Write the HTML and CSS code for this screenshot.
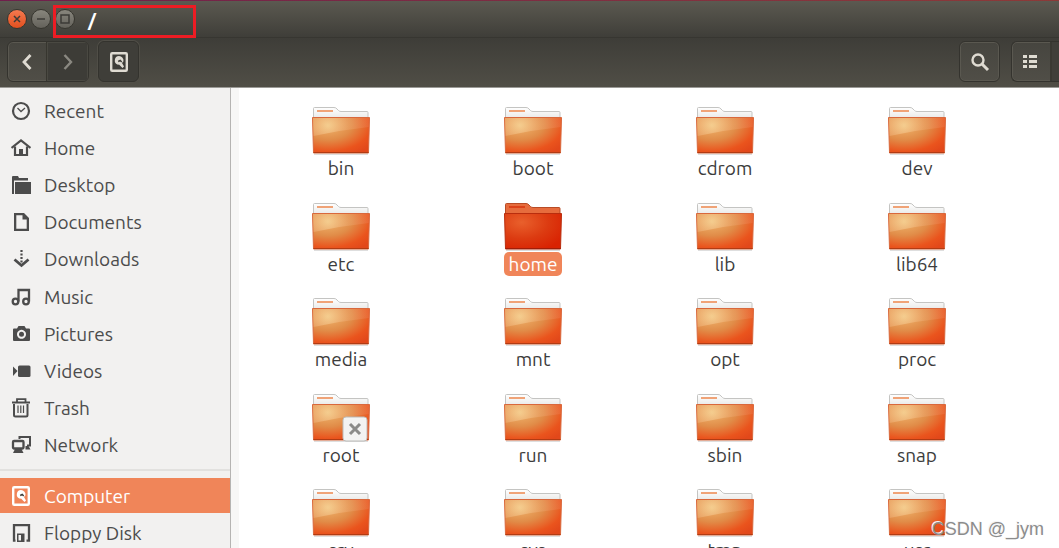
FILE: index.html
```
<!DOCTYPE html>
<html lang="en">
<head>
    <meta charset="UTF-8">
    <meta name="viewport" content="width=device-width, initial-scale=1.0">
    <title>/</title>
    <link rel="stylesheet" href="styles.css">
    <script src="script.js" defer></script>
</head>
<body>
    <svg class="defs" width="0" height="0" aria-hidden="true">
        <defs>
            <linearGradient id="gTab" x1="0" y1="0" x2="0" y2="1">
                <stop offset="0" stop-color="#ffffff"/><stop offset="1" stop-color="#e6e6e4"/>
            </linearGradient>
            <radialGradient id="gBase" cx="0.27" cy="0.2" r="0.95">
                <stop offset="0" stop-color="#efb870"/><stop offset="0.45" stop-color="#e18c48"/><stop offset="0.8" stop-color="#ea541d"/><stop offset="1" stop-color="#e2481a"/>
            </radialGradient>
            <radialGradient id="gGlow" gradientUnits="userSpaceOnUse" cx="17" cy="20" r="42">
                <stop offset="0" stop-color="#f8dca4" stop-opacity="0.6"/><stop offset="0.5" stop-color="#f4b583" stop-opacity="0.3"/><stop offset="1" stop-color="#ee8058" stop-opacity="0.3"/>
            </radialGradient>
            <radialGradient id="gHome" cx="0.3" cy="0.25" r="0.85">
                <stop offset="0" stop-color="#e9602c"/><stop offset="0.55" stop-color="#dc3b11"/><stop offset="1" stop-color="#d92202"/>
            </radialGradient>
            <symbol id="folder" viewBox="0 0 60 50">
                <path d="M3 47.5h54V49H3z" fill="#000" opacity="0.13"/>
                <path d="M2.500 14V2.500q0-1 1-1H23q2 0 3 1.500L27.500 4.500q1 1 2.500 1h26q1 0 1 1V14z" fill="url(#gTab)" stroke="#c4c4c2"/>
                <path d="M6 4h16v2H6z" fill="#f0a377"/>
                <path d="M1.500 11.500h57L57.500 47h-55z" fill="url(#gBase)" stroke="#d9683c"/>
                <path d="M2 12h56l-.3 9Q30 24 2.500 30z" fill="url(#gGlow)"/>
                <path d="M2.500 46.500h55" stroke="#b13c14"/>
            </symbol>
            <symbol id="folder-open" viewBox="0 0 60 50">
                <path d="M3 47.5h54V49H3z" fill="#000" opacity="0.15"/>
                <path d="M2.500 14V2.500q0-1 1-1H23q2 0 3 1.500L27.500 4.500q1 1 2.500 1h26q1 0 1 1V14z" fill="#e66c3d" stroke="#b84c26"/>
                <path d="M6 4h16v2H6z" fill="#dc4218"/>
                <path d="M1.500 11.500h57L57.500 47h-55z" fill="url(#gHome)" stroke="#b92d0d"/>
                <path d="M2.500 46.500h55" stroke="#a01e08"/>
            </symbol>
            <symbol id="i-disk" viewBox="0 0 20 20">
                <rect x="2.200" y="1.200" width="15.600" height="17.600" rx="1" fill="none" stroke="currentColor" stroke-width="2.400"/>
                <path d="M10 4a4.500 4.500 0 0 1 4.400 5.500L13 11l2 3.500L13.500 16 10 12.500l-1 .3A4.500 4.500 0 0 1 10 4z" fill="currentColor"/>
                <path d="M9.200 9.500l2-1 1.500 1.500" fill="none" class="disk-arm"/>
            </symbol>
        </defs>
    </svg>
    <header class="window-head">
        <div class="titlebar">
            <button class="win-btn close" type="button" aria-label="Close">
                <svg viewBox="0 0 20 20"><path d="M7 7l6 6M13 7l-6 6"/></svg>
            </button>
            <button class="win-btn" type="button" aria-label="Minimize">
                <svg viewBox="0 0 20 20"><path d="M6 10h8"/></svg>
            </button>
            <button class="win-btn" type="button" aria-label="Maximize">
                <svg viewBox="0 0 20 20"><path d="M6 6h8v8H6z"/></svg>
            </button>
            <h1 class="title">/</h1>
            <div class="mark"></div>
        </div>
        <div class="toolbar">
            <div class="btn-group">
                <button type="button" aria-label="Back">
                    <svg viewBox="0 0 20 20"><path d="M13.500 3L7 10l6.500 7" fill="none" stroke="currentColor" stroke-width="2.800"/></svg>
                </button>
                <button class="off" type="button" aria-label="Forward">
                    <svg viewBox="0 0 20 20"><path d="M6.500 3l6.500 7-6.500 7" fill="none" stroke="currentColor" stroke-width="2.400"/></svg>
                </button>
            </div>
            <button class="btn pressed" type="button" aria-label="Computer">
                <svg viewBox="0 0 20 20"><use href="#i-disk"/></svg>
            </button>
            <button class="btn search" type="button" aria-label="Search">
                <svg viewBox="0 0 20 20"><circle cx="8" cy="8" r="5.500" fill="none" stroke="currentColor" stroke-width="2.400"/><path d="M12 12l6 6" stroke="currentColor" stroke-width="3"/></svg>
            </button>
            <div class="btn-group views">
                <button type="button" aria-label="List view">
                    <svg viewBox="0 0 20 20"><path d="M2 3h4v3H2zM8 3h8v3H8zM2 8h4v3H2zM8 8h8v3H8zM2 13h4v3H2zM8 13h8v3H8z" fill="currentColor"/></svg>
                </button>
                <button class="cut" type="button" aria-label="Icon view"></button>
            </div>
        </div>
    </header>
    <div class="content">
        <nav class="sidebar">
            <ul class="places">
                <li><a href="#"><svg viewBox="0 0 20 20"><circle cx="10" cy="10" r="8" fill="none" stroke="currentColor" stroke-width="2.200"/><path d="M6.500 7l3.500 3.500L14 7" fill="none" stroke="currentColor" stroke-width="1.300"/></svg>Recent</a></li>
                <li><a href="#"><svg viewBox="0 0 20 20"><path d="M.5 10L10 2.500l9.500 7.500" fill="none" stroke="currentColor" stroke-width="2.200"/><path d="M4 8.500V17h12V8.500" fill="none" stroke="currentColor" stroke-width="2.200"/><path d="M8 17v-6h4v6z" fill="currentColor"/></svg>Home</a></li>
                <li><a href="#"><svg viewBox="0 0 20 20"><path d="M1 19V2q0-1 1-1h5l1 2h9v2.500H3V19z" fill="currentColor"/><path d="M4 7h16v12H4z" fill="currentColor"/></svg>Desktop</a></li>
                <li><a href="#"><svg viewBox="0 0 20 20"><path fill-rule="evenodd" d="M3 1h10l5 5v13H3zM5.300 3.300v13.400h10.400V7.500H11.500V3.300z" fill="currentColor"/></svg>Documents</a></li>
                <li><a href="#"><svg viewBox="0 0 20 20"><path d="M10.500 1v14" stroke="currentColor" stroke-width="2.200" stroke-dasharray="2 1.500" fill="none"/><path d="M3.500 10.500l7 6 7-6" fill="none" stroke="currentColor" stroke-width="2.800"/></svg>Downloads</a></li>
                <li><a href="#"><svg viewBox="0 0 20 20"><circle cx="4.500" cy="14.500" r="2.800" fill="none" stroke="currentColor" stroke-width="2.300"/><circle cx="15" cy="14.500" r="2.800" fill="none" stroke="currentColor" stroke-width="2.300"/><path d="M7.500 14.500V3H18v11.500" fill="none" stroke="currentColor" stroke-width="2.300"/></svg>Music</a></li>
                <li><a href="#"><svg viewBox="0 0 20 20"><path fill-rule="evenodd" d="M2 5.500q0-1 1-1h3l1.500-2.500h6L15 4.500h3q1 0 1 1V16q0 1-1 1H3q-1 0-1-1zM10.500 5.800a4.500 4.500 0 1 0 .01 0z" fill="currentColor"/><circle cx="10.500" cy="10.300" r="2.500" fill="currentColor"/></svg>Pictures</a></li>
                <li><a href="#"><svg viewBox="0 0 20 20"><path d="M2 5.500L6.500 10 2 15z" fill="currentColor"/><rect x="7" y="4.500" width="12.500" height="11.500" rx="1.500" fill="currentColor"/></svg>Videos</a></li>
                <li><a href="#"><svg viewBox="0 0 20 20"><path d="M6 3.500V1.200h8.500v2.300M1 4.500h18" fill="none" stroke="currentColor" stroke-width="1.800"/><path d="M3 6v11q0 1.500 1.500 1.500H15q1.500 0 1.500-1.500V6" fill="none" stroke="currentColor" stroke-width="2"/><path d="M7 7.500V15M9.800 7.500V15M12.500 7.500V15" stroke="currentColor" stroke-width="1.200"/></svg>Trash</a></li>
                <li><a href="#"><svg viewBox="0 0 20 20"><path d="M8.500 4V2h10.500v8.500h-3" fill="none" stroke="currentColor" stroke-width="2"/><rect x="2" y="6" width="10.500" height="7.500" rx="1" fill="none" stroke="currentColor" stroke-width="2.300"/><path d="M4 14h6.500l2 4H2zM14.500 11h3l2 3.500h-5z" fill="currentColor"/></svg>Network</a></li>
            </ul>
            <ul class="devices">
                <li><a class="current" href="#"><svg viewBox="0 0 20 20"><use href="#i-disk"/></svg>Computer</a></li>
                <li><a href="#"><svg viewBox="0 0 20 20"><path d="M4.500 17.700H3V2.200h15v15.500h-2.500" fill="none" stroke="currentColor" stroke-width="2.300"/><path fill-rule="evenodd" d="M6 10.500h7.500v8.500H6zM7.500 12v5.500H10V12z" fill="currentColor"/></svg>Floppy Disk</a></li>
            </ul>
        </nav>
        <main class="files">
            <div class="file-grid" id="files"></div>
        </main>
    </div>
    <p class="watermark">CSDN @_jym</p>
</body>
</html>
```

FILE: styles.css
```
* {
  box-sizing: border-box;
}
body {
  display: flex;
  flex-direction: column;
  height: 100vh;
  margin: 0;
  overflow: hidden;
  background: #fff;
  color: #4c4c4c;
  font-family: Ubuntu, "Noto Sans", sans-serif;
  font-size: 19px;
  line-height: 24px;
}
ul {
  margin: 0;
  padding: 0;
  list-style: none;
}
button {
  display: flex;
  flex: none;
  align-items: center;
  justify-content: center;
  padding: 0;
  border: 0;
  background: none;
  color: #dfdbd2;
}
svg {
  flex: none;
}
.defs {
  position: absolute;
}
.window-head {
  flex: none;
  border-bottom: 1px solid #9b9a96;
  background: linear-gradient(#5c5a51, #3e3d38 38px, #504e46);
}
.titlebar {
  position: relative;
  display: flex;
  align-items: center;
  gap: 4px;
  height: 38px;
  padding: 0 7px;
  border-bottom: 1px solid #373631;
}
.titlebar::before {
  position: absolute;
  top: 0;
  left: 0;
  width: 100%;
  height: 1px;
  content: '';
  background: linear-gradient(90deg, #701f4c, #8c3a38);
}
.win-btn {
  width: 20px;
  height: 20px;
  border: 1px solid #37362f;
  border-radius: 50%;
  background: linear-gradient(#88867d, #64625b);
}
.win-btn.close {
  background: linear-gradient(#f4794f, #e2501f);
}
.win-btn svg {
  width: 20px;
  height: 20px;
  fill: none;
  stroke: #3c3b37;
  stroke-width: 1.5;
}
.title {
  margin: 0 0 0 9px;
  padding-top: 3px;
  color: #fff;
  font-size: 19px;
}
.mark {
  position: absolute;
  top: 5px;
  left: 53px;
  width: 143px;
  height: 33px;
  border: 3px solid #ed1c24;
}
.toolbar {
  display: flex;
  align-items: center;
  height: 49px;
  padding: 0 0 2px 7px;
}
.toolbar svg {
  width: 20px;
  height: 20px;
}
.btn, .btn-group {
  height: 41px;
  border: 1px solid #34332e;
  border-radius: 6px;
  background: linear-gradient(#46453f, #504e47);
  box-shadow: inset 0 0 0 1px #5a5850;
}
.btn {
  width: 41px;
}
.btn-group {
  display: flex;
  overflow: hidden;
}
.btn-group button {
  width: 38px;
}
.btn-group .off {
  width: 42px;
  border-left: 1px solid #37362f;
  background: #3d3c37;
  box-shadow: inset 0 0 0 1px #4a4942;
  color: #8a8881;
}
.btn.pressed {
  margin-left: 9px;
  background: #3f3e39;
  box-shadow: 0 0 0 1px #504e47;
}
.btn.search {
  margin-left: auto;
}
.views {
  width: 48px;
  margin-left: 11px;
  border-right: 0;
  border-radius: 6px 0 0 6px;
}
.views .cut {
  border-left: 2px solid #3a3933;
  background: #403f3a;
}
.disk-arm {
  stroke: #3f3e39;
  stroke-width: 1.5;
}
.content {
  display: flex;
  flex: 1;
  min-height: 0;
}
.sidebar {
  flex: none;
  width: 231px;
  padding-top: 5px;
  overflow: hidden;
  border-right: 1px solid #b5b4b2;
  background: #f2f1f0;
}
.places {
  display: grid;
  grid-auto-rows: 1fr;
  min-height: 372px;
}
.sidebar a {
  display: flex;
  align-items: center;
  gap: 13px;
  height: 35px;
  padding-left: 11px;
  color: #4c4c4c;
  text-decoration: none;
}
.sidebar svg {
  width: 20px;
  height: 20px;
}
.devices {
  margin-top: 4px;
  padding-top: 7px;
  border-top: 2px solid #e2e1df;
}
.devices li {
  height: 37px;
}
.sidebar .current {
  background: #f08559;
  color: #fff;
}
.current .disk-arm {
  stroke: #f08559;
}
.files {
  flex: 1;
  padding: 18px 0 0 6px;
  overflow: hidden;
  border-left: 8px solid #f7f7f6;
}
.file-grid {
  display: grid;
  grid-template-columns: repeat(auto-fill, 192px);
  grid-auto-rows: 1fr;
  min-height: 478px;
}
.file {
  position: relative;
  display: flex;
  flex-direction: column;
  align-items: center;
  color: #3c3c3c;
  text-decoration: none;
}
.file .icon {
  width: 60px;
  height: 50px;
}
.file span {
  padding: 0 5px;
  border-radius: 5px;
}
.file.selected span {
  background: #f08559;
  color: #fff;
}
.file .emblem {
  position: absolute;
  top: 23px;
  left: 97px;
  width: 26px;
  height: 26px;
}
.watermark {
  position: absolute;
  right: 15px;
  bottom: 7px;
  margin: 0;
  color: #8c8c8c;
  font-family: "Liberation Sans", Arial, sans-serif;
  font-size: 18px;
  text-shadow: -1px -1px 0 #f4f4f4;
}
```

FILE: script.js
```
'use strict'
const names = ['bin', 'boot', 'cdrom', 'dev', 'etc', 'home', 'lib', 'lib64', 'media', 'mnt', 'opt', 'proc', 'root', 'run', 'sbin', 'snap', 'srv', 'sys', 'tmp', 'usr'];
const selected = 'home';
const locked = ['root'];
const lockEmblem = '<svg class="emblem" viewBox="0 0 26 26"><rect x="1" y="1" width="24" height="24" rx="3" fill="#f3f3f2" stroke="#bcbcba"/><path d="M8 8l10 10M18 8L8 18" stroke="#8b8b89" stroke-width="3"/></svg>';
const files = document.querySelector('#files');
names.forEach(name => {
    const link = document.createElement('a');
    link.href = '#';
    link.classList.add('file');
    if (name === selected) link.classList.add('selected');
    const icon = name === selected ? 'folder-open' : 'folder';
    link.innerHTML = '<svg class="icon"><use href="#' + icon + '"/></svg>'
        + (locked.includes(name) ? lockEmblem : '')
        + '<span>' + name + '</span>';
    files.appendChild(link);
});
```
